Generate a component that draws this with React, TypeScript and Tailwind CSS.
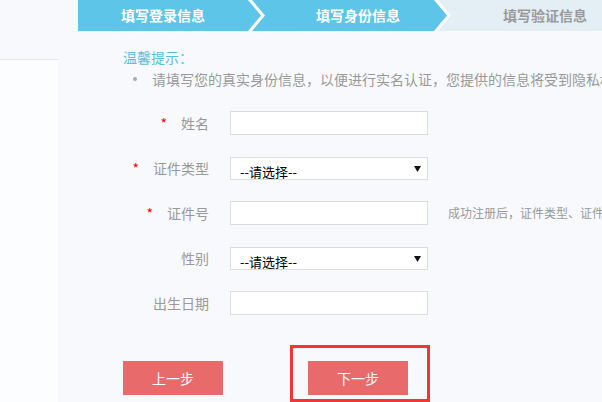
import React from "react";

const Star = () => <span className="text-[#f00] text-[14px] mr-[14px]">*</span>;

function Row({
  label,
  required,
  children,
}: {
  label: string;
  required?: boolean;
  children: React.ReactNode;
}) {
  return (
    <div className="flex items-center h-[24px] whitespace-nowrap">
      <div className="w-[131px] shrink-0 flex items-center justify-end text-[14px] text-[#999]">
        {required && <Star />}
        <span>{label}</span>
      </div>
      <div className="ml-[21px] shrink-0 flex items-center">{children}</div>
    </div>
  );
}

const Input = () => (
  <input className="w-[198px] h-[24px] shrink-0 border border-[#ddd] bg-white outline-none" />
);

const Select = () => (
  <div className="relative w-[198px] h-[23px] shrink-0 border border-[#ddd] bg-white">
    <select className="appearance-none w-full h-full bg-transparent pl-[9px] text-[13px] text-black outline-none">
      <option>--请选择--</option>
    </select>
    <svg
      className="absolute right-[6px] top-[8px]"
      width="7"
      height="6"
      viewBox="0 0 7 6"
    >
      <path d="M0 0H7L3.5 6Z" fill="#111" />
    </svg>
  </div>
);

export default function App() {
  return (
    <div className="w-[602px] h-[402px] overflow-hidden bg-[#f8f9fd] flex font-['Noto_Sans_CJK_SC',sans-serif]">
      <div className="w-[58px] shrink-0 flex flex-col">
        <div className="h-[59px]" />
        <div className="flex-1 border-t border-[#e3e7ec] bg-[#fbfdfe]" />
      </div>

      <div className="ml-[20px] flex-1 min-w-0 flex flex-col overflow-hidden">
        <div className="flex h-[31px] bg-white">
          <div className="w-[183px] shrink-0 bg-[#5cc5e8] [clip-path:polygon(0_0,calc(100%-13px)_0,100%_50%,calc(100%-13px)_100%,0_100%)] flex items-center justify-center pr-[13px] text-white font-bold text-[14px]">
            填写登录信息
          </div>
          <div className="ml-[-9px] w-[195px] shrink-0 bg-[#5cc5e8] [clip-path:polygon(0_0,calc(100%-13px)_0,100%_50%,calc(100%-13px)_100%,0_100%,13px_50%)] flex items-center pl-[64px] text-white font-bold text-[14px]">
            填写身份信息
          </div>
          <div className="ml-[-9px] flex-1 bg-[#e4eef5] [clip-path:polygon(0_0,100%_0,100%_100%,0_100%,13px_50%)] flex items-center pl-[65px] text-[#9a9a9a] font-bold text-[14px]">
            填写验证信息
          </div>
        </div>

        <div className="pl-[45px] mt-[16px] text-[14px] leading-[20px] text-[#5bbfe0]">
          温馨提示：
        </div>
        <div className="pl-[55px] mt-[2px] flex items-center whitespace-nowrap text-[14px] leading-[20px] text-[#999]">
          <span className="w-[4px] h-[4px] rounded-full bg-[#aaa] mr-[15px] shrink-0" />
          请填写您的真实身份信息，以便进行实名认证，您提供的信息将受到隐私权保护
        </div>

        <div className="mt-[22px] flex flex-col gap-[21px]">
          <Row label="姓名" required>
            <Input />
          </Row>
          <Row label="证件类型" required>
            <Select />
          </Row>
          <Row label="证件号" required>
            <Input />
            <span className="ml-[20px] text-[12px] text-[#999] whitespace-nowrap">
              成功注册后，证件类型、证件号不可修改
            </span>
          </Row>
          <Row label="性别">
            <Select />
          </Row>
          <Row label="出生日期">
            <Input />
          </Row>
        </div>

        <div className="mt-[46px] pl-[45px] flex gap-[85px]">
          <button className="w-[100px] h-[34px] shrink-0 bg-[#e86a6a] text-white text-[14px]">
            上一步
          </button>
          <div className="relative shrink-0">
            <button className="w-[100px] h-[34px] bg-[#e86a6a] text-white text-[14px]">
              下一步
            </button>
            <div className="absolute left-[-18px] top-[-16px] w-[140px] h-[57px] border-[3px] border-[#f53434] pointer-events-none" />
          </div>
        </div>
      </div>
    </div>
  );
}
